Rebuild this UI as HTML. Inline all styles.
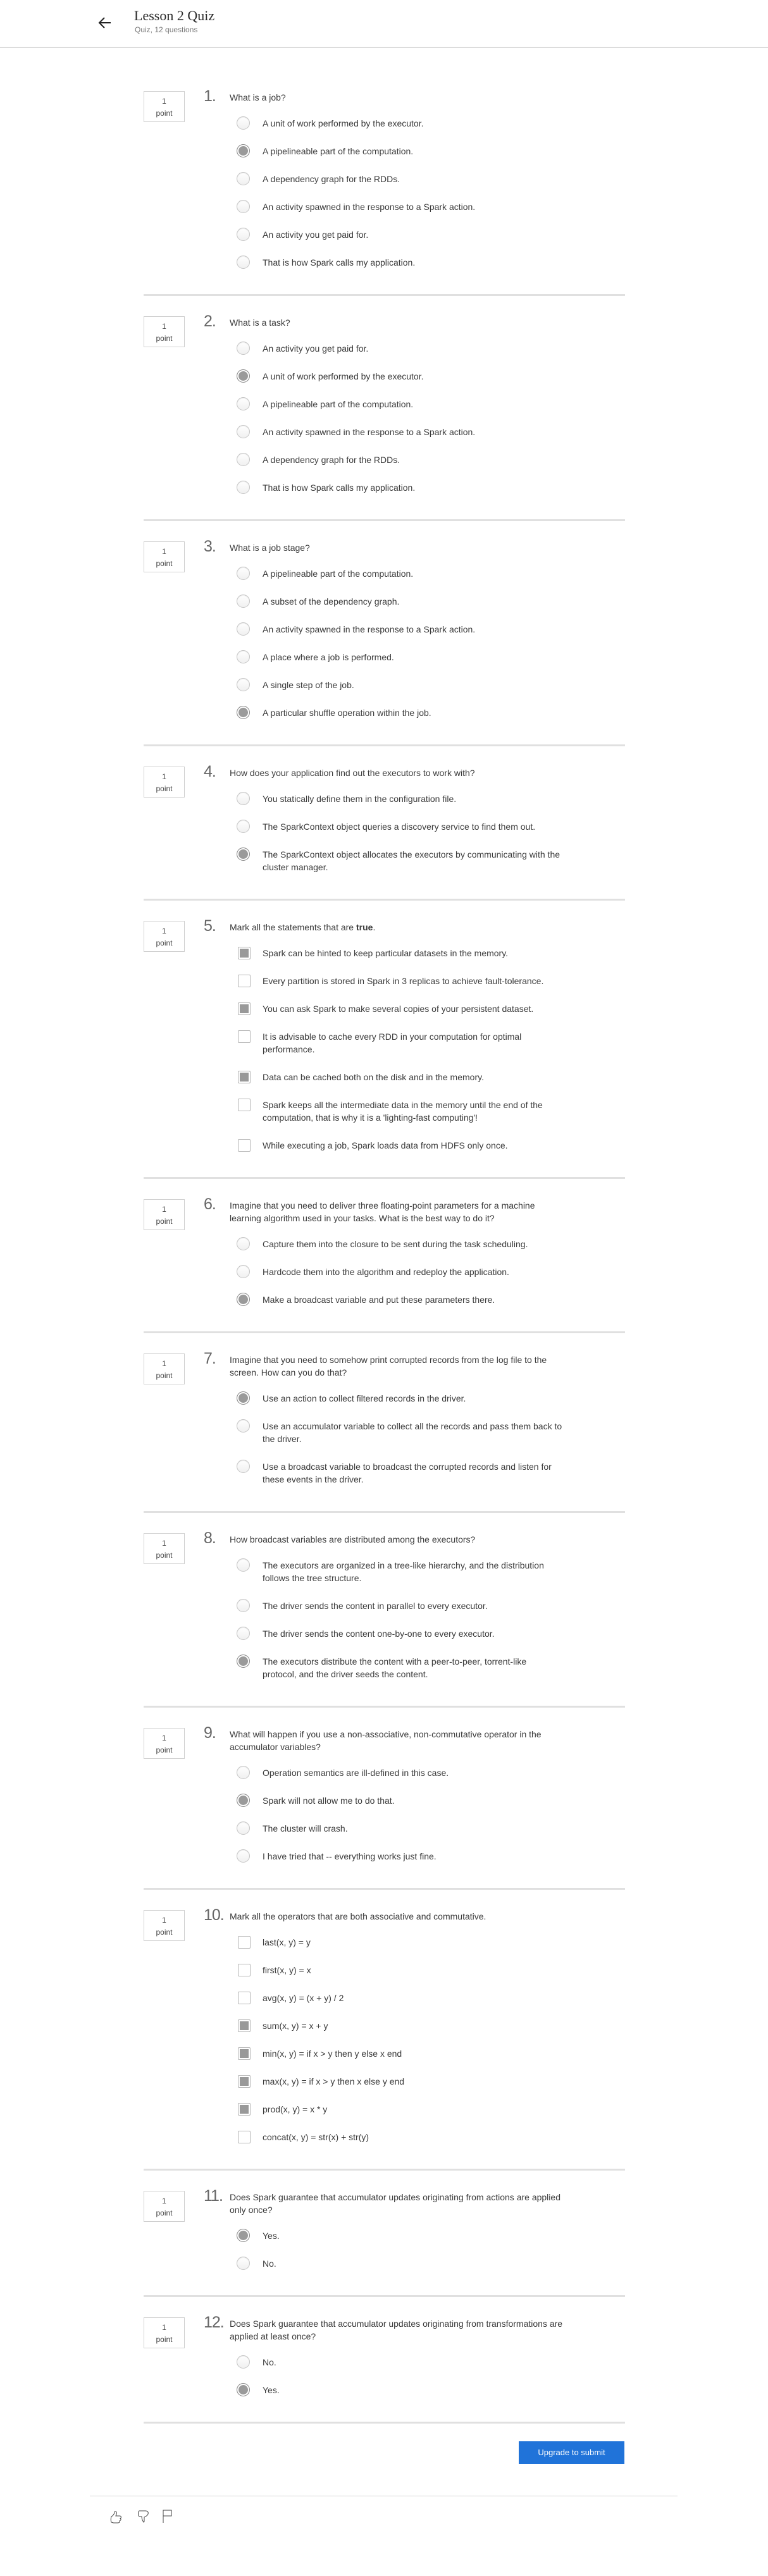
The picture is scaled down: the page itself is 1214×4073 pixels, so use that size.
<!DOCTYPE html>
<html><head><meta charset="utf-8">
<style>
*{box-sizing:border-box;margin:0;padding:0}
html,body{width:1214px;height:4073px;background:#fff;overflow:hidden}
body{font-family:"Liberation Sans",sans-serif;color:#3a3a3a;position:relative}
.hdr{height:76px;border-bottom:2px solid #dcdcdc;position:relative}
.back{position:absolute;left:155px;top:26px}
.title{position:absolute;left:212px;top:12px;font-family:"Liberation Serif",serif;font-size:22px;color:#2a2a2a}
.sub{position:absolute;left:213px;top:40px;font-size:12px;color:#777}
main{position:absolute;left:227px;top:144px;width:761px}
.q{position:relative}
.pt{position:absolute;left:0;top:0;width:65px;height:49px;border:1px solid #cfcfcf;text-align:center;font-size:12px;color:#444;line-height:19px;padding-top:6px}
.num{position:absolute;left:95px;top:-6px;font-size:25px;color:#666;font-weight:300;letter-spacing:-1px}
.qt{margin-left:136px;font-size:14px;line-height:20px;white-space:nowrap;color:#3a3a3a}
.opts{margin-left:147px;margin-top:9px;padding-bottom:28px}
.o{position:relative;padding:12px 0 12px 41px;font-size:14px;line-height:20px;white-space:nowrap;color:#3a3a3a}
.r{position:absolute;left:0;top:11px;width:21px;height:21px;border-radius:50%;border:1px solid #c4c4c4;background:linear-gradient(#fff,#f0f0f0);box-shadow:inset 0 1px 1px rgba(0,0,0,.08)}
.r.on{background:#9a9a9a;border:1px solid #8a8a8a;box-shadow:inset 0 0 0 2px #fff}
.c{position:absolute;left:2px;top:12px;width:20px;height:20px;border:1px solid #b5b5b5;background:#fff;border-radius:2px}
.c.on{background:#999;box-shadow:inset 0 0 0 2px #fff}
.div{border-top:3px solid #e0e0e0;margin-bottom:32px}
.btn{position:absolute;left:820px;top:3860px;width:167px;height:36px;background:#2073d9;color:#fff;font-size:13px;text-align:center;line-height:36px}
.fl{position:absolute;left:142px;top:3946px;width:929px;border-top:1px solid #d4d4d4}
.ic{position:absolute;top:3968px}
</style></head><body>
<div class="hdr">
<svg class="back" width="22" height="20" viewBox="0 0 22 20"><path d="M20 10H3M10 2L2 10l8 8" fill="none" stroke="#222" stroke-width="2"/></svg>
<div class="title">Lesson 2 Quiz</div>
<div class="sub">Quiz, 12 questions</div>
</div>
<main>
<div class="q"><div class="pt">1<br>point</div><div class="num">1.</div><div class="qt">What is a job?</div>
<div class="opts">
<div class="o"><span class="r"></span>A unit of work performed by the executor.</div>
<div class="o"><span class="r on"></span>A pipelineable part of the computation.</div>
<div class="o"><span class="r"></span>A dependency graph for the RDDs.</div>
<div class="o"><span class="r"></span>An activity spawned in the response to a Spark action.</div>
<div class="o"><span class="r"></span>An activity you get paid for.</div>
<div class="o"><span class="r"></span>That is how Spark calls my application.</div>
</div></div><div class="div"></div>

<div class="q"><div class="pt">1<br>point</div><div class="num">2.</div><div class="qt">What is a task?</div>
<div class="opts">
<div class="o"><span class="r"></span>An activity you get paid for.</div>
<div class="o"><span class="r on"></span>A unit of work performed by the executor.</div>
<div class="o"><span class="r"></span>A pipelineable part of the computation.</div>
<div class="o"><span class="r"></span>An activity spawned in the response to a Spark action.</div>
<div class="o"><span class="r"></span>A dependency graph for the RDDs.</div>
<div class="o"><span class="r"></span>That is how Spark calls my application.</div>
</div></div><div class="div"></div>

<div class="q"><div class="pt">1<br>point</div><div class="num">3.</div><div class="qt">What is a job stage?</div>
<div class="opts">
<div class="o"><span class="r"></span>A pipelineable part of the computation.</div>
<div class="o"><span class="r"></span>A subset of the dependency graph.</div>
<div class="o"><span class="r"></span>An activity spawned in the response to a Spark action.</div>
<div class="o"><span class="r"></span>A place where a job is performed.</div>
<div class="o"><span class="r"></span>A single step of the job.</div>
<div class="o"><span class="r on"></span>A particular shuffle operation within the job.</div>
</div></div><div class="div"></div>

<div class="q"><div class="pt">1<br>point</div><div class="num">4.</div><div class="qt">How does your application find out the executors to work with?</div>
<div class="opts">
<div class="o"><span class="r"></span>You statically define them in the configuration file.</div>
<div class="o"><span class="r"></span>The SparkContext object queries a discovery service to find them out.</div>
<div class="o"><span class="r on"></span>The SparkContext object allocates the executors by communicating with the<br>cluster manager.</div>
</div></div><div class="div"></div>

<div class="q"><div class="pt">1<br>point</div><div class="num">5.</div><div class="qt">Mark all the statements that are <b>true</b>.</div>
<div class="opts">
<div class="o"><span class="c on"></span>Spark can be hinted to keep particular datasets in the memory.</div>
<div class="o"><span class="c"></span>Every partition is stored in Spark in 3 replicas to achieve fault-tolerance.</div>
<div class="o"><span class="c on"></span>You can ask Spark to make several copies of your persistent dataset.</div>
<div class="o"><span class="c"></span>It is advisable to cache every RDD in your computation for optimal<br>performance.</div>
<div class="o"><span class="c on"></span>Data can be cached both on the disk and in the memory.</div>
<div class="o"><span class="c"></span>Spark keeps all the intermediate data in the memory until the end of the<br>computation, that is why it is a 'lighting-fast computing'!</div>
<div class="o"><span class="c"></span>While executing a job, Spark loads data from HDFS only once.</div>
</div></div><div class="div"></div>

<div class="q"><div class="pt">1<br>point</div><div class="num">6.</div><div class="qt">Imagine that you need to deliver three floating-point parameters for a machine<br>learning algorithm used in your tasks. What is the best way to do it?</div>
<div class="opts">
<div class="o"><span class="r"></span>Capture them into the closure to be sent during the task scheduling.</div>
<div class="o"><span class="r"></span>Hardcode them into the algorithm and redeploy the application.</div>
<div class="o"><span class="r on"></span>Make a broadcast variable and put these parameters there.</div>
</div></div><div class="div"></div>

<div class="q"><div class="pt">1<br>point</div><div class="num">7.</div><div class="qt">Imagine that you need to somehow print corrupted records from the log file to the<br>screen. How can you do that?</div>
<div class="opts">
<div class="o"><span class="r on"></span>Use an action to collect filtered records in the driver.</div>
<div class="o"><span class="r"></span>Use an accumulator variable to collect all the records and pass them back to<br>the driver.</div>
<div class="o"><span class="r"></span>Use a broadcast variable to broadcast the corrupted records and listen for<br>these events in the driver.</div>
</div></div><div class="div"></div>

<div class="q"><div class="pt">1<br>point</div><div class="num">8.</div><div class="qt">How broadcast variables are distributed among the executors?</div>
<div class="opts">
<div class="o"><span class="r"></span>The executors are organized in a tree-like hierarchy, and the distribution<br>follows the tree structure.</div>
<div class="o"><span class="r"></span>The driver sends the content in parallel to every executor.</div>
<div class="o"><span class="r"></span>The driver sends the content one-by-one to every executor.</div>
<div class="o"><span class="r on"></span>The executors distribute the content with a peer-to-peer, torrent-like<br>protocol, and the driver seeds the content.</div>
</div></div><div class="div"></div>

<div class="q"><div class="pt">1<br>point</div><div class="num">9.</div><div class="qt">What will happen if you use a non-associative, non-commutative operator in the<br>accumulator variables?</div>
<div class="opts">
<div class="o"><span class="r"></span>Operation semantics are ill-defined in this case.</div>
<div class="o"><span class="r on"></span>Spark will not allow me to do that.</div>
<div class="o"><span class="r"></span>The cluster will crash.</div>
<div class="o"><span class="r"></span>I have tried that -- everything works just fine.</div>
</div></div><div class="div"></div>

<div class="q"><div class="pt">1<br>point</div><div class="num">10.</div><div class="qt">Mark all the operators that are both associative and commutative.</div>
<div class="opts">
<div class="o"><span class="c"></span>last(x, y) = y</div>
<div class="o"><span class="c"></span>first(x, y) = x</div>
<div class="o"><span class="c"></span>avg(x, y) = (x + y) / 2</div>
<div class="o"><span class="c on"></span>sum(x, y) = x + y</div>
<div class="o"><span class="c on"></span>min(x, y) = if x &gt; y then y else x end</div>
<div class="o"><span class="c on"></span>max(x, y) = if x &gt; y then x else y end</div>
<div class="o"><span class="c on"></span>prod(x, y) = x * y</div>
<div class="o"><span class="c"></span>concat(x, y) = str(x) + str(y)</div>
</div></div><div class="div"></div>

<div class="q"><div class="pt">1<br>point</div><div class="num">11.</div><div class="qt">Does Spark guarantee that accumulator updates originating from actions are applied<br>only once?</div>
<div class="opts">
<div class="o"><span class="r on"></span>Yes.</div>
<div class="o"><span class="r"></span>No.</div>
</div></div><div class="div"></div>

<div class="q"><div class="pt">1<br>point</div><div class="num">12.</div><div class="qt">Does Spark guarantee that accumulator updates originating from transformations are<br>applied at least once?</div>
<div class="opts">
<div class="o"><span class="r"></span>No.</div>
<div class="o"><span class="r on"></span>Yes.</div>
</div></div><div class="div"></div>
</main>
<div class="btn">Upgrade to submit</div>
<div class="fl"></div>
<svg class="ic" style="left:174px" width="20" height="22" viewBox="0 0 20 22"><path d="M2 20c-1-2-1-6 0-9 2-1 4-3 5-6 0-3 2-3 3-1 1 2 0 4-1 6h6c3 0 3 3 1 4 2 1 1 3-1 4 1 2-1 3-3 3H6c-2 0-3-1-4-1z" fill="none" stroke="#444" stroke-width="1"/></svg>
<svg class="ic" style="left:217px" width="20" height="22" viewBox="0 0 20 22"><path d="M3 2c-2 2-2 6 0 9h4c0 3 1 6 3 9 1 0 1-1 1-3v-5c2-1 5-2 6-5 1-3-1-5-4-5H3z" fill="none" stroke="#444" stroke-width="1"/></svg>
<svg class="ic" style="left:256px" width="18" height="22" viewBox="0 0 18 22"><path d="M2 21V1h13v9H2" fill="none" stroke="#444" stroke-width="1"/></svg>
</body></html>
